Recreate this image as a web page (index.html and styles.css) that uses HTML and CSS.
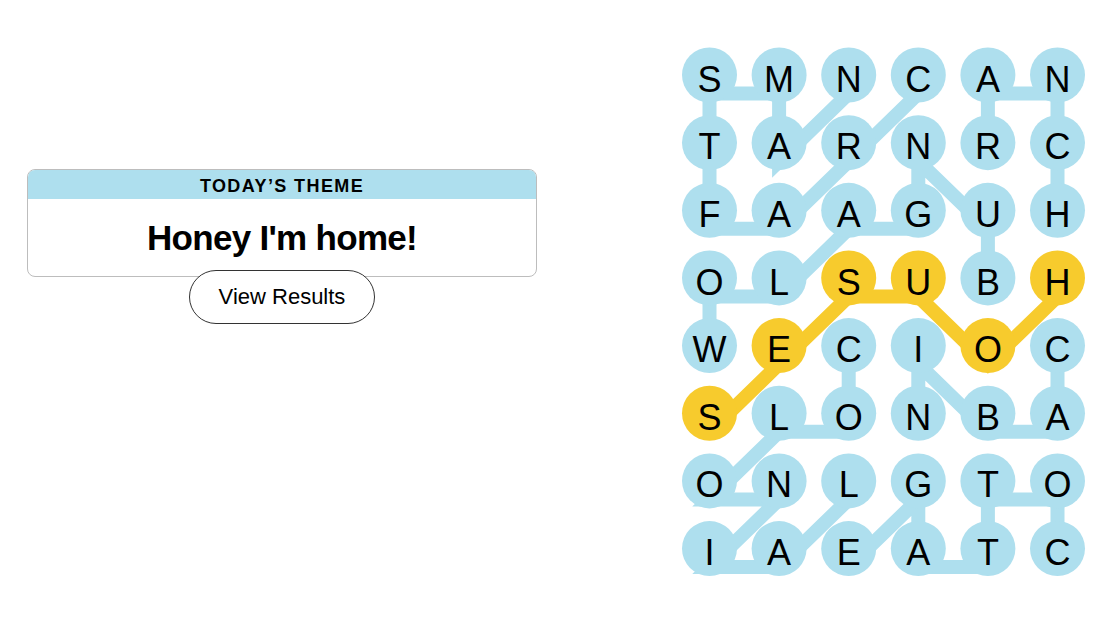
FILE: index.html
```html
<!DOCTYPE html>
<html lang="en">
<head>
<meta charset="utf-8">
<title>Strands</title>
<link rel="stylesheet" href="styles.css">
</head>
<body>
<main class="game">
  <section class="side">
    <div class="theme-card">
      <div class="theme-head">Today’s Theme</div>
      <div class="theme-body">Honey I'm home!</div>
    </div>
    <button class="view-btn" type="button">View Results</button>
  </section>
  <svg class="board" width="412" height="550" viewBox="0 0 412 550" xmlns="http://www.w3.org/2000/svg">
    <g class="paths">
      <polyline class="path" points="238.3,53.5 168.7,121.2 99.1,188.8 29.5,188.8 29.5,121.2 29.5,53.5 99.1,53.5 99.1,121.2 168.7,53.5"/>
      <polyline class="path" points="307.9,256.5 307.9,188.8 238.3,121.2 238.3,188.8 168.7,188.8 99.1,256.5 29.5,256.5 29.5,324.1"/>
      <polyline class="path" points="307.9,121.2 307.9,53.5 377.5,53.5 377.5,121.2 377.5,188.8"/>
      <polyline class="path" points="168.7,324.1 168.7,391.8 99.1,391.8 29.5,459.4 99.1,459.4 29.5,527.1 99.1,527.1 168.7,459.4"/>
      <polyline class="path" points="377.5,527.1 377.5,459.4 307.9,459.4 307.9,527.1 238.3,527.1 238.3,459.4 168.7,527.1"/>
      <polyline class="path" points="377.5,324.1 377.5,391.8 307.9,391.8 238.3,324.1 238.3,391.8"/>
      <polyline class="path path-span" points="377.5,256.5 307.9,324.1 238.3,256.5 168.7,256.5 99.1,324.1 29.5,391.8"/>
    </g>
    <g class="cells">
      <circle class="cell" cx="29.5" cy="35" r="27.5"/><circle class="cell" cx="99.1" cy="35" r="27.5"/><circle class="cell" cx="168.7" cy="35" r="27.5"/><circle class="cell" cx="238.3" cy="35" r="27.5"/><circle class="cell" cx="307.9" cy="35" r="27.5"/><circle class="cell" cx="377.5" cy="35" r="27.5"/>
      <circle class="cell" cx="29.5" cy="102.65" r="27.5"/><circle class="cell" cx="99.1" cy="102.65" r="27.5"/><circle class="cell" cx="168.7" cy="102.65" r="27.5"/><circle class="cell" cx="238.3" cy="102.65" r="27.5"/><circle class="cell" cx="307.9" cy="102.65" r="27.5"/><circle class="cell" cx="377.5" cy="102.65" r="27.5"/>
      <circle class="cell" cx="29.5" cy="170.3" r="27.5"/><circle class="cell" cx="99.1" cy="170.3" r="27.5"/><circle class="cell" cx="168.7" cy="170.3" r="27.5"/><circle class="cell" cx="238.3" cy="170.3" r="27.5"/><circle class="cell" cx="307.9" cy="170.3" r="27.5"/><circle class="cell" cx="377.5" cy="170.3" r="27.5"/>
      <circle class="cell" cx="29.5" cy="237.95" r="27.5"/><circle class="cell" cx="99.1" cy="237.95" r="27.5"/><circle class="cell cell-span" cx="168.7" cy="237.95" r="27.5"/><circle class="cell cell-span" cx="238.3" cy="237.95" r="27.5"/><circle class="cell" cx="307.9" cy="237.95" r="27.5"/><circle class="cell cell-span" cx="377.5" cy="237.95" r="27.5"/>
      <circle class="cell" cx="29.5" cy="305.6" r="27.5"/><circle class="cell cell-span" cx="99.1" cy="305.6" r="27.5"/><circle class="cell" cx="168.7" cy="305.6" r="27.5"/><circle class="cell" cx="238.3" cy="305.6" r="27.5"/><circle class="cell cell-span" cx="307.9" cy="305.6" r="27.5"/><circle class="cell" cx="377.5" cy="305.6" r="27.5"/>
      <circle class="cell cell-span" cx="29.5" cy="373.25" r="27.5"/><circle class="cell" cx="99.1" cy="373.25" r="27.5"/><circle class="cell" cx="168.7" cy="373.25" r="27.5"/><circle class="cell" cx="238.3" cy="373.25" r="27.5"/><circle class="cell" cx="307.9" cy="373.25" r="27.5"/><circle class="cell" cx="377.5" cy="373.25" r="27.5"/>
      <circle class="cell" cx="29.5" cy="440.9" r="27.5"/><circle class="cell" cx="99.1" cy="440.9" r="27.5"/><circle class="cell" cx="168.7" cy="440.9" r="27.5"/><circle class="cell" cx="238.3" cy="440.9" r="27.5"/><circle class="cell" cx="307.9" cy="440.9" r="27.5"/><circle class="cell" cx="377.5" cy="440.9" r="27.5"/>
      <circle class="cell" cx="29.5" cy="508.55" r="27.5"/><circle class="cell" cx="99.1" cy="508.55" r="27.5"/><circle class="cell" cx="168.7" cy="508.55" r="27.5"/><circle class="cell" cx="238.3" cy="508.55" r="27.5"/><circle class="cell" cx="307.9" cy="508.55" r="27.5"/><circle class="cell" cx="377.5" cy="508.55" r="27.5"/>
    </g>
    <g class="letters">
      <text x="29.5" y="51.5">S</text><text x="99.1" y="51.5">M</text><text x="168.7" y="51.5">N</text><text x="238.3" y="51.5">C</text><text x="307.9" y="51.5">A</text><text x="377.5" y="51.5">N</text>
      <text x="29.5" y="119.2">T</text><text x="99.1" y="119.2">A</text><text x="168.7" y="119.2">R</text><text x="238.3" y="119.2">N</text><text x="307.9" y="119.2">R</text><text x="377.5" y="119.2">C</text>
      <text x="29.5" y="186.8">F</text><text x="99.1" y="186.8">A</text><text x="168.7" y="186.8">A</text><text x="238.3" y="186.8">G</text><text x="307.9" y="186.8">U</text><text x="377.5" y="186.8">H</text>
      <text x="29.5" y="254.5">O</text><text x="99.1" y="254.5">L</text><text x="168.7" y="254.5">S</text><text x="238.3" y="254.5">U</text><text x="307.9" y="254.5">B</text><text x="377.5" y="254.5">H</text>
      <text x="29.5" y="322.1">W</text><text x="99.1" y="322.1">E</text><text x="168.7" y="322.1">C</text><text x="238.3" y="322.1">I</text><text x="307.9" y="322.1">O</text><text x="377.5" y="322.1">C</text>
      <text x="29.5" y="389.8">S</text><text x="99.1" y="389.8">L</text><text x="168.7" y="389.8">O</text><text x="238.3" y="389.8">N</text><text x="307.9" y="389.8">B</text><text x="377.5" y="389.8">A</text>
      <text x="29.5" y="457.4">O</text><text x="99.1" y="457.4">N</text><text x="168.7" y="457.4">L</text><text x="238.3" y="457.4">G</text><text x="307.9" y="457.4">T</text><text x="377.5" y="457.4">O</text>
      <text x="29.5" y="525.1">I</text><text x="99.1" y="525.1">A</text><text x="168.7" y="525.1">E</text><text x="238.3" y="525.1">A</text><text x="307.9" y="525.1">T</text><text x="377.5" y="525.1">C</text>
    </g>
  </svg>
</main>
</body>
</html>
```

FILE: styles.css
```css
html, body {
  margin: 0;
  padding: 0;
  background: #ffffff;
}

body {
  font-family: "Liberation Sans", Arial, sans-serif;
  color: #000000;
}

.game {
  display: flex;
  align-items: flex-start;
  padding: 40px 0 0 27px;
}

.side {
  width: 510px;
  margin-top: 129px;
  display: flex;
  flex-direction: column;
  align-items: center;
}

.theme-card {
  width: 100%;
  box-sizing: border-box;
  border: 1px solid #bdbdbd;
  border-radius: 8px;
  overflow: hidden;
  background: #ffffff;
}

.theme-head {
  background: #aedfee;
  height: 27px;
  padding-top: 2px;
  line-height: 29px;
  text-align: center;
  font-size: 18px;
  font-weight: 700;
  letter-spacing: 1.4px;
  text-transform: uppercase;
}

.theme-body {
  padding: 19px 0 18px;
  font-size: 35px;
  line-height: 40px;
  font-weight: 700;
  letter-spacing: -0.7px;
  text-align: center;
}

.view-btn {
  margin-top: -7px;
  width: 186px;
  height: 54px;
  box-sizing: border-box;
  padding: 0;
  border: 1px solid #333333;
  border-radius: 27px;
  background: #ffffff;
  color: #000000;
  font-family: "Liberation Sans", Arial, sans-serif;
  font-size: 22px;
}

.board {
  display: block;
  margin-left: 143px;
  flex: none;
}

.path {
  fill: none;
  stroke: #aedfee;
  stroke-width: 14;
  stroke-linejoin: miter;
  stroke-linecap: butt;
}

.path-span {
  stroke: #f7cb2d;
}

.cell {
  fill: #aedfee;
}

.cell-span {
  fill: #f7cb2d;
}

.letters text {
  font-family: "Liberation Sans", Arial, sans-serif;
  font-size: 36px;
  fill: #000000;
  text-anchor: middle;
}
```
